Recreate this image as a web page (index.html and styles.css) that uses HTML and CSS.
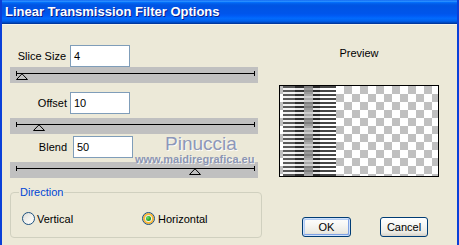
FILE: index.html
```html
<!DOCTYPE html>
<html>
<head>
<meta charset="utf-8">
<title>Linear Transmission Filter Options</title>
<link rel="stylesheet" href="styles.css">
</head>
<body>
<div class="window">
  <div class="titlebar"><span class="title">Linear Transmission Filter Options</span></div>
  <div class="client">
    <div class="left">
      <div class="field field-first">
        <span class="field-label">Slice Size</span>
        <div class="input">4</div>
      </div>
      <div class="slider">
        <div class="track"></div>
        <svg class="thumb" style="left:6px" width="12" height="7" viewBox="0 0 12 7"><path d="M0.5 6.5 L6 0.8 L11.5 6.5 Z" fill="none" stroke="#000" stroke-width="1"/></svg>
      </div>
      <div class="field field-second">
        <span class="field-label">Offset</span>
        <div class="input">10</div>
      </div>
      <div class="slider slider-gap">
        <div class="track"></div>
        <svg class="thumb" style="left:23px" width="12" height="7" viewBox="0 0 12 7"><path d="M0.5 6.5 L6 0.8 L11.5 6.5 Z" fill="none" stroke="#000" stroke-width="1"/></svg>
      </div>
      <div class="field field-third">
        <span class="field-label">Blend</span>
        <div class="input">50</div>
      </div>
      <div class="slider slider-gap">
        <div class="track"></div>
        <svg class="thumb" style="left:179px" width="12" height="7" viewBox="0 0 12 7"><path d="M0.5 6.5 L6 0.8 L11.5 6.5 Z" fill="none" stroke="#000" stroke-width="1"/></svg>
      </div>
      <fieldset class="group">
        <legend class="group-title">Direction</legend>
        <div class="radios">
          <label class="radio-item radio-first"><span class="radio"></span><span>Vertical</span></label>
          <label class="radio-item"><span class="radio checked"></span><span>Horizontal</span></label>
        </div>
      </fieldset>
    </div>
    <div class="right">
      <div class="preview-label">Preview</div>
      <div class="preview">
        <div class="pv-gap"></div>
        <div class="pv-a1"></div>
        <div class="pv-a2"></div>
        <div class="pv-mid"></div>
        <div class="pv-b1"></div>
        <div class="pv-b2"></div>
      </div>
      <div class="buttons">
        <button class="btn btn-default btn-ok">OK</button>
        <button class="btn btn-cancel">Cancel</button>
      </div>
    </div>
  </div>
  <div class="wm-name">Pinuccia</div>
  <div class="wm-url">www.maidiregrafica.eu</div>
</div>
</body>
</html>
```
FILE: styles.css
```css
* { box-sizing: border-box; }
html, body { margin: 0; padding: 0; }
body {
  width: 459px;
  height: 245px;
  overflow: hidden;
  background: #ece9d8;
  font-family: "Liberation Sans", Arial, sans-serif;
  font-size: 11px;
  color: #000;
}
.window {
  position: relative;
  width: 459px;
  height: 245px;
  border-left: 2px solid #0a3fd8;
  border-right: 2px solid #0a3fd8;
  background: #ece9d8;
  display: flex;
  flex-direction: column;
}
.titlebar {
  height: 24px;
  flex: none;
  padding-left: 3px;
  background: linear-gradient(to bottom, #0058ee 0%, #3593ff 4%, #288eff 6%, #127dff 8%, #036ffc 10%, #0262ee 14%, #0057e5 20%, #0054e3 24%, #0055eb 56%, #005bf5 66%, #026afe 76%, #0062ef 86%, #0052d6 92%, #0040ab 96%, #003092 100%);
}
.title {
  display: block;
  color: #fff;
  font-weight: bold;
  font-size: 13px;
  line-height: 24px;
  text-shadow: 1px 1px 0 #0a1e8a;
  white-space: nowrap;
}
.client {
  flex: 1;
  display: flex;
  padding-left: 8px;
  border-top: 1px solid #f6f4ec;
}
.left {
  width: 252px;
  display: flex;
  flex-direction: column;
  padding-top: 20px;
}
.field {
  display: flex;
  align-items: center;
  height: 22px;
}
.field-label {
  width: 57px;
  text-align: right;
  margin-right: 3px;
  white-space: nowrap;
}
.field-first .field-label { width: 56px; margin-right: 4px; }
.field-second { margin-top: 9px; }
.field-third { margin-top: 2px; }
.field-third .field-label { margin-right: 6px; }
.input {
  width: 60px;
  height: 22px;
  border: 1px solid #7f9db9;
  background: #fff;
  padding: 0 3px;
  font-size: 11px;
  line-height: 20px;
}
.slider {
  position: relative;
  width: 248px;
  height: 16px;
  background: #c0c0c0;
  padding: 4px 3px 0 6px;
}
.slider-gap { margin-top: 4px; }
.track {
  height: 5px;
  border-left: 1px solid #000;
  border-right: 1px solid #000;
  background: linear-gradient(#000, #000) 0 2px / 100% 1px no-repeat;
}
.thumb {
  position: absolute;
  top: 6px;
  display: block;
}
.group {
  margin: 8px 0 0 0;
  padding: 0 0 0 8px;
  border: 1px solid #d0d0bf;
  border-radius: 4px;
  height: 52px;
  min-width: 0;
}
.group-title {
  color: #0046d5;
  padding: 0 1px;
  line-height: 13px;
}
.radios {
  display: flex;
  align-items: center;
  margin-top: 13px;
  padding-left: 3px;
}
.radio-item {
  display: flex;
  align-items: center;
  gap: 3px;
}
.radio-first { width: 120px; gap: 2px; }
.radio {
  width: 13px;
  height: 13px;
  border-radius: 50%;
  border: 1px solid #1c5180;
  background: linear-gradient(135deg, #dcdcd7 0%, #f4f4f0 55%, #ffffff 100%);
  display: flex;
  align-items: center;
  justify-content: center;
  flex: none;
}
.radio.checked {
  box-shadow: inset 0 0 0 2px #f8b636;
}
.radio.checked::after {
  content: "";
  width: 5px;
  height: 5px;
  border-radius: 50%;
  background: radial-gradient(circle at 35% 35%, #6de06a 0%, #21a121 60%, #177a17 100%);
}
.right {
  flex: 1;
  display: flex;
  flex-direction: column;
  padding-left: 17px;
}
.preview-label {
  width: 160px;
  text-align: center;
  margin-top: 22px;
  line-height: 13px;
}
.preview {
  margin-top: 25px;
  width: 160px;
  height: 92px;
  border: 1px solid #000;
  display: flex;
  background-color: #fff;
  background-image: conic-gradient(#ffffff 25%, #c0c0c0 0 50%, #ffffff 0 75%, #c0c0c0 0);
  background-size: 16px 16px;
}
.pv-gap { width: 3px; }
.pv-a1 {
  width: 12px;
  background: repeating-linear-gradient(#5a5a5a 0 2px, #f4f4f4 2px 4px);
}
.pv-a2 {
  width: 9px;
  background: repeating-linear-gradient(#2e2e2e 0 2px, #e8e8e8 2px 4px);
}
.pv-mid {
  width: 9px;
  background:
    repeating-linear-gradient(rgba(0,0,0,0.18) 0 2px, transparent 2px 4px),
    repeating-linear-gradient(#9a9a9a 0 8px, #cdcdcd 8px 16px);
}
.pv-b1 {
  width: 7px;
  background: repeating-linear-gradient(#2a2a2a 0 2px, #e6e6e6 2px 4px);
}
.pv-b2 {
  width: 16px;
  background: repeating-linear-gradient(#474747 0 2px, #ffffff 2px 4px);
}
.buttons {
  display: flex;
  gap: 29px;
  margin-top: 40px;
  margin-left: 23px;
}
.btn {
  height: 20px;
  padding: 0;
  border: 1px solid #003c74;
  border-radius: 3px;
  background: linear-gradient(to bottom, #ffffff 0%, #f6f6f3 40%, #ebeae3 80%, #d8d3c8 100%);
  font-family: "Liberation Sans", Arial, sans-serif;
  font-size: 11px;
  color: #000;
  line-height: 18px;
}
.btn-ok { width: 49px; }
.btn-cancel { width: 48px; }
.btn-default {
  box-shadow: inset 0 0 0 1px #cee0fb, inset -1px -1px 0 1px #7fa2e4, inset 1px 1px 0 1px #b3cdf5;
}
.wm-name {
  position: absolute;
  left: 163px;
  top: 134px;
  font-family: "Liberation Sans", Arial, sans-serif;
  font-size: 19px;
  line-height: 19px;
  color: #8d97b8;
  text-shadow: 1px 1px 0 rgba(255,255,255,0.85);
  white-space: nowrap;
}
.wm-url {
  position: absolute;
  left: 133px;
  top: 154px;
  font-family: "Liberation Sans", Arial, sans-serif;
  font-weight: bold;
  font-size: 11px;
  line-height: 11px;
  color: #8b95b3;
  text-shadow: 1px 1px 0 rgba(255,255,255,0.7);
  white-space: nowrap;
}
```
